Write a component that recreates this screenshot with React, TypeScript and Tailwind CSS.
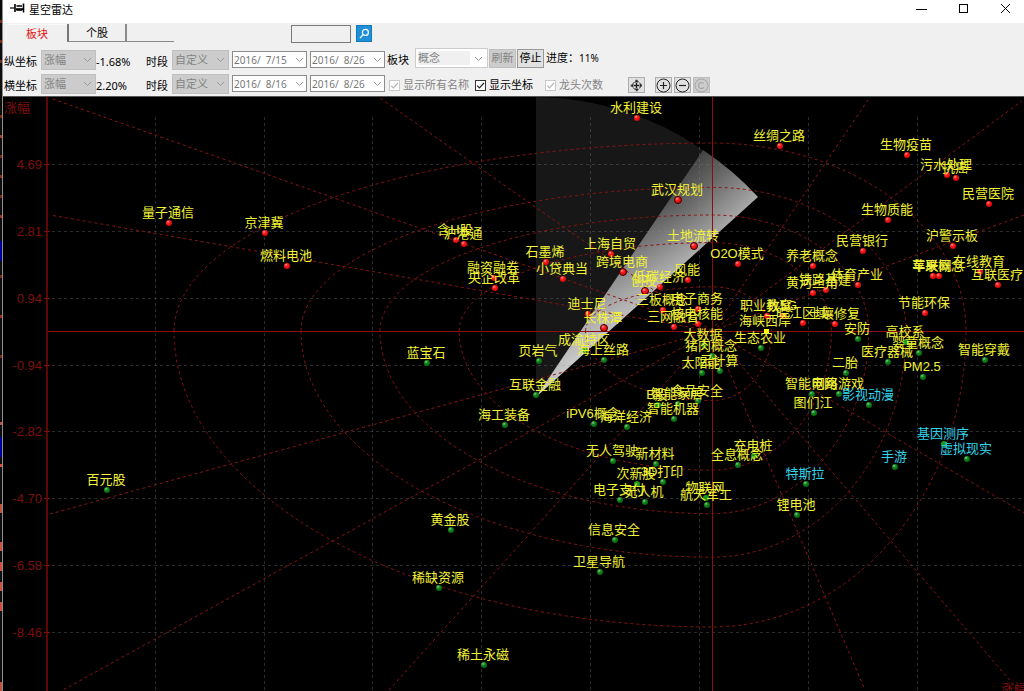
import React, { useState } from "react";

type Tone = "up" | "down" | "flat";
type Node = { name: string; x: number; y: number; tone: Tone; hot?: boolean; lit?: boolean };

const up = (name: string, x: number, y: number, hot = false): Node => ({ name, x, y, tone: "up", hot });
const down = (name: string, x: number, y: number, lit = false): Node => ({ name, x, y, tone: "down", lit });

const NODES: Node[] = [
  up("水利建设", 637, 118),
  up("丝绸之路", 780, 146),
  up("生物疫苗", 907, 155),
  up("污水处理", 947, 175),
  up("抗癌", 956, 178),
  up("民营医院", 989, 204),
  up("武汉规划", 678, 200, true),
  up("生物质能", 888, 220),
  up("量子通信", 169, 223),
  up("京津冀", 265, 233),
  up("含H股", 456, 240),
  up("沪港通", 464, 244),
  up("土地流转", 694, 246, true),
  up("沪警示板", 953, 246),
  up("民营银行", 863, 251),
  up("上海自贸", 611, 254),
  up("石墨烯", 546, 262),
  up("O2O模式", 738, 264),
  up("养老概念", 813, 266),
  up("燃料电池", 287, 266),
  up("跨境电商", 623, 272, true),
  up("在线教育", 980, 272),
  up("车联网", 933, 276),
  up("苹果概念", 939, 276),
  up("融资融券", 494, 278),
  up("小贷典当", 563, 279),
  up("风能", 688, 280),
  up("体育产业", 858, 285),
  up("互联医疗", 998, 285),
  up("低碳经济", 660, 287),
  up("央企改革", 495, 288),
  up("铁路基建", 826, 290),
  up("创投", 645, 291, true),
  up("黄河三角", 813, 293),
  up("三板概念", 663, 310),
  up("电子商务", 698, 309),
  up("节能环保", 925, 313),
  up("迪士尼", 588, 314),
  up("职业教育", 767, 316),
  up("数5G", 783, 316),
  up("皖江区域", 803, 323),
  up("核电核能", 698, 324),
  up("土壤修复", 835, 324),
  up("三网融合", 674, 327),
  up("长株潭", 604, 328, true),
  { name: "海峡西岸", x: 766, y: 331, tone: "flat" },
  down("安防", 858, 339),
  down("高校系", 906, 342, true),
  down("大数据", 704, 345),
  down("生态农业", 761, 348),
  down("成渝特区", 585, 350, true),
  down("婴童概念", 919, 353),
  down("猪肉概念", 712, 356),
  down("海上丝路", 604, 360),
  down("智能穿戴", 985, 360),
  down("页岩气", 539, 361),
  down("医疗器械", 888, 362),
  down("蓝宝石", 427, 363),
  down("云计算", 720, 371),
  down("太阳能", 702, 373),
  down("二胎", 846, 373),
  down("PM2.5", 923, 377),
  down("智能电网", 812, 394),
  down("网络游戏", 839, 394),
  down("互联金融", 536, 395),
  down("食品安全", 698, 401),
  down("智能家居", 678, 404),
  down("B股", 658, 405, true),
  down("影视动漫", 869, 405),
  down("图们江", 814, 413),
  down("智能机器", 674, 419),
  down("iPV6概念", 594, 424),
  down("海工装备", 505, 425),
  down("海洋经济", 627, 427),
  down("基因测序", 944, 444, true),
  down("充电桩", 754, 456, true),
  down("虚拟现实", 967, 459),
  down("无人驾驶", 613, 461),
  down("新材料", 656, 464),
  down("全息概念", 738, 465),
  down("手游", 895, 467),
  down("3D打印", 663, 482),
  down("特斯拉", 806, 484),
  down("次新股", 637, 484, true),
  down("百元股", 107, 490),
  down("物联网", 706, 498, true),
  down("电子支付", 620, 500),
  down("无人机", 645, 502),
  down("航天军工", 707, 505),
  down("锂电池", 797, 515),
  down("黄金股", 451, 530),
  down("信息安全", 615, 540),
  down("卫星导航", 600, 572),
  down("稀缺资源", 439, 588),
  down("稀土永磁", 484, 665),
];

const WATCHED = ["影视动漫", "基因测序", "虚拟现实", "手游", "特斯拉"];

const TICKS = [
  { y: 164, label: "4.69" },
  { y: 231, label: "2.81" },
  { y: 298, label: "0.94" },
  { y: 365, label: "-0.94" },
  { y: 431, label: "-2.82" },
  { y: 498, label: "-4.70" },
  { y: 565, label: "-6.58" },
  { y: 632, label: "-8.46" },
];
const COLUMNS = [155, 264, 372, 481, 590, 699, 808, 917];

const CX = 712;
const CY = 331;
const REACH = { left: 538, right: 254, top: 188, bottom: 296 };
const RINGS = [1, 0.764, 0.617, 0.47, 0.235];

const ring = (k: number) => {
  const { left, right, top, bottom } = REACH;
  return (
    `M${CX - left * k} ${CY}` +
    `A${left * k} ${top * k} 0 0 1 ${CX} ${CY - top * k}` +
    `A${right * k} ${top * k} 0 0 1 ${CX + right * k} ${CY}` +
    `A${right * k} ${bottom * k} 0 0 1 ${CX} ${CY + bottom * k}` +
    `A${left * k} ${bottom * k} 0 0 1 ${CX - left * k} ${CY}`
  );
};

const RAYS = [
  [50, 98], [50, 215], [380, 98],
  [868, 100], [1022, 101], [1024, 215],
  [50, 514], [63, 690], [389, 690],
  [1024, 513], [1018, 690], [865, 690],
];

function RadarChart() {
  return (
    <svg
      viewBox="3 97 1021 594"
      className="block h-auto w-full bg-black"
      role="img"
      aria-label="星空雷达"
    >
      <defs>
        <linearGradient id="beam" gradientUnits="userSpaceOnUse" x1="390" y1="429" x2="442" y2="486">
          <stop offset="0" stopColor="#3c3c3c" />
          <stop offset="0.45" stopColor="#686868" />
          <stop offset="1" stopColor="#a8a8a8" />
        </linearGradient>
        <radialGradient id="core" gradientUnits="userSpaceOnUse" cx="575" cy="365" r="190">
          <stop offset="0" stopColor="#ffffff" stopOpacity="0.42" />
          <stop offset="1" stopColor="#ffffff" stopOpacity="0" />
        </radialGradient>
        <radialGradient id="red" cx="0.35" cy="0.3" r="0.8">
          <stop offset="0" stopColor="#ff9c9c" />
          <stop offset="0.35" stopColor="#ff1c1c" />
          <stop offset="1" stopColor="#c80000" />
        </radialGradient>
        <radialGradient id="green" cx="0.35" cy="0.3" r="0.8">
          <stop offset="0" stopColor="#8fd08f" />
          <stop offset="0.35" stopColor="#158a20" />
          <stop offset="1" stopColor="#005c08" />
        </radialGradient>
        <clipPath id="plot">
          <rect x="50" y="97" width="974" height="594" />
        </clipPath>
      </defs>

      <path d="M536 397V97A300 300 0 0 1 703 150Z" fill="#171717" />
      <path d="M536 397L703 150A299 299 0 0 1 758 197Z" fill="url(#beam)" />
      <path d="M536 397L703 150A299 299 0 0 1 758 197Z" fill="url(#core)" />

      <g stroke="#8c8c8c" strokeOpacity="0.3" strokeDasharray="3 3" shapeRendering="crispEdges">
        {COLUMNS.map((x) => (
          <line key={x} x1={x + 0.5} x2={x + 0.5} y1="117" y2="691" />
        ))}
        {TICKS.map((t) => (
          <line key={t.y} x1="52" x2="1024" y1={t.y + 0.5} y2={t.y + 0.5} />
        ))}
      </g>

      <g clipPath="url(#plot)" fill="none" stroke="#8a1414" strokeDasharray="3 3">
        {RINGS.map((k) => (
          <path key={k} d={ring(k)} />
        ))}
        {RAYS.map(([x, y]) => (
          <line key={`${x}-${y}`} x1={CX} y1={CY} x2={x} y2={y} />
        ))}
      </g>

      <g shapeRendering="crispEdges">
        <rect x="47" y="331" width="977" height="1" fill="#8c1010" />
        <rect x="712" y="97" width="1" height="594" fill="#8c1010" />
        <rect x="46" y="97" width="2" height="594" fill="#5e0505" />
        {TICKS.map((t) => (
          <rect key={t.y} x="44" y={t.y} width="6" height="1" fill="#7d0f0f" />
        ))}
      </g>

      <g className="font-['Liberation_Sans','Noto_Sans_CJK_SC',sans-serif] text-[13px]" fill="#7d0f0f">
        <text x="4" y="112">涨幅</text>
        <text x="1001" y="693">涨幅</text>
        {TICKS.map((t) => (
          <text key={t.y} x="42" y={t.y + 5} textAnchor="end">
            {t.label}
          </text>
        ))}
      </g>

      {NODES.map((n) =>
        n.tone === "flat" ? (
          <rect key={n.name} x={n.x - 2} y={n.y - 2} width="5" height="5" fill="#ffff00" />
        ) : (
          <circle
            key={n.name}
            cx={n.x}
            cy={n.y}
            r={n.hot ? 3.5 : 3}
            fill={n.lit ? "#1c9a1c" : n.tone === "up" ? "url(#red)" : "url(#green)"}
            stroke={n.hot ? "#3a0000" : "none"}
          />
        )
      )}
      <g
        className="font-['Liberation_Sans','Noto_Sans_CJK_SC',sans-serif] text-[13px]"
        textAnchor="middle"
      >
        {NODES.map((n) => (
          <text key={n.name} x={n.x - 1} y={n.y - 6} fill={WATCHED.includes(n.name) ? "#30d4ea" : "#f2f236"}>
            {n.name}
          </text>
        ))}
      </g>
    </svg>
  );
}

function Chevron({ className = "" }: { className?: string }) {
  return (
    <svg viewBox="0 0 9 6" className={`h-[6px] w-[9px] fill-none stroke-[#9a9a9a] ${className}`} aria-hidden="true">
      <path d="M1 1L4.5 4.5L8 1" />
    </svg>
  );
}

function GreySelect({ label, value }: { label: string; value: string }) {
  return (
    <div className="relative h-5">
      <select
        aria-label={label}
        disabled
        className="block h-full w-full appearance-none border border-[#c0c0c0] bg-[#cccccc] pt-px pl-[2px] text-[11px] leading-4 text-[#838383] opacity-100"
      >
        <option>{value}</option>
      </select>
      <Chevron className="pointer-events-none absolute top-[7px] right-1" />
    </div>
  );
}

function DateBox({ label, value }: { label: string; value: string }) {
  return (
    <div className="ml-[3px] flex h-[17px] items-center border border-[#8c8c8c] bg-white pr-[2px]">
      <input
        aria-label={label}
        defaultValue={value}
        className="w-0 min-w-0 flex-1 bg-transparent pl-px font-['Noto_Sans',sans-serif] text-[10px] leading-[14px] whitespace-pre text-[#777777] outline-none"
      />
      <button aria-label="选择日期">
        <Chevron className="block" />
      </button>
    </div>
  );
}

function AxisControls(props: { axis: string; change: string; from: string; to: string }) {
  const { axis, change, from, to } = props;
  return (
    <div className="grid h-[25px] shrink-0 grid-cols-[37px_55px_50px_26px_57px_78px_78px] items-center pl-px">
      <span className="pt-[5px]">{axis}</span>
      <GreySelect label={axis} value="涨幅" />
      <span className="pt-[5px] font-['Noto_Sans',sans-serif]">{change}</span>
      <span className="pt-[5px]">时段</span>
      <GreySelect label={`${axis}时段`} value="自定义" />
      <DateBox label={`${axis}开始`} value={from} />
      <DateBox label={`${axis}结束`} value={to} />
    </div>
  );
}

function Tick({ text, disabled = false, className }: { text: string; disabled?: boolean; className: string }) {
  const [on, setOn] = useState(true);
  const tone = disabled ? "border-[#c8c8c8]" : "border-[#333333]";
  return (
    <label className={`flex items-center gap-[3px] whitespace-nowrap ${disabled ? "text-[#838383]" : "text-black"} ${className}`}>
      <span className="relative block h-[11px] w-[11px]">
        <input
          type="checkbox"
          checked={on}
          disabled={disabled}
          onChange={(e) => setOn(e.target.checked)}
          className={`block h-[11px] w-[11px] appearance-none border bg-white ${tone}`}
        />
        {on && (
          <svg
            viewBox="0 0 11 11"
            aria-hidden="true"
            className={`pointer-events-none absolute inset-0 h-full w-full fill-none ${disabled ? "stroke-[#b5b5b5]" : "stroke-[#222222]"}`}
          >
            <path d="M2.2 5.6L4.4 7.9L9 3" strokeWidth="1.2" />
          </svg>
        )}
      </span>
      {text}
    </label>
  );
}

const iconButton = "flex h-4 w-[17px] items-center justify-center border";

function ZoomButton({ label, d, disabled = false }: { label: string; d: string; disabled?: boolean }) {
  return (
    <button
      aria-label={label}
      disabled={disabled}
      className={`${iconButton} ${disabled ? "border-[#bdbdbd] bg-[#cccccc]" : "border-[#adadad] bg-[#e1e1e1]"}`}
    >
      <svg viewBox="0 0 15 15" className={`h-[15px] w-[15px] shrink-0 fill-none ${disabled ? "stroke-[#a5a5a5]" : "stroke-[#222222]"}`}>
        <circle cx="7.5" cy="7.5" r="6.5" />
        <path d={d} strokeWidth="1.2" />
      </svg>
    </button>
  );
}

const SPECKS = [
  [20, "#7a2a10"], [40, "#7a2a10"], [60, "#6a3020"], [115, "#7a2a10"], [135, "#a04020"], [155, "#7a2a10"],
  [175, "#903018"], [195, "#7a2a10"], [215, "#a03020"], [275, "#7a2a10"], [315, "#a03020"], [355, "#7a2a10"],
  [422, "#c05040"], [464, "#d05040"], [504, "#c05040"], [542, "#d05040"], [562, "#d05040"], [582, "#d05040"],
  [602, "#d05040"], [682, "#c05040"],
] as const;

export default function App() {
  return (
    <div className="flex min-h-screen bg-black font-['Liberation_Sans','Noto_Sans_CJK_SC',sans-serif] text-[11px] leading-4 text-black">
      <div className="w-[3px] shrink-0 overflow-hidden border-r border-[#8f8f8f] bg-[#0c0c0c]" aria-hidden="true">
        <svg viewBox="0 0 2 691" className="block w-[2px]">
          {SPECKS.map(([y, c]) => (
            <rect key={y} x="0" y={y} width="2" height={y > 500 ? 9 : 3} fill={c} />
          ))}
          <rect x="0" y="241" width="2" height="20" fill="#00009a" />
          <rect x="0" y="437" width="2" height="20" fill="#00009a" />
        </svg>
      </div>

      <div className="flex min-w-0 flex-1 flex-col">
        <header className="border-b border-[#555555] bg-[#f0f0f0]">
          <div className="flex h-[23px] items-center bg-white pl-[7px]">
            <svg viewBox="0 0 15 10" className="mb-[7px] h-[10px] w-[15px] fill-none stroke-black" aria-hidden="true">
              <path d="M0 5H5" strokeWidth="1.2" />
              <path d="M5 1V9M6.5 3H12M6.5 7H12M13.5 0.5V9.5" strokeWidth="1.6" />
              <path d="M6 6.2H13" strokeWidth="2" />
            </svg>
            <h1 className="ml-1 pb-[3px]">星空雷达</h1>
            <div className="ml-auto flex h-[17px] gap-1 self-start">
              <button aria-label="最小化" className="flex w-[38px] items-center justify-center">
                <svg viewBox="0 0 11 11" className="h-[11px] w-[11px] stroke-black"><path d="M0 6.5H11" /></svg>
              </button>
              <button aria-label="最大化" className="flex w-[38px] items-center justify-center">
                <svg viewBox="0 0 11 11" className="h-[11px] w-[11px] fill-none stroke-black"><rect x="1.5" y="1.5" width="8" height="8" /></svg>
              </button>
              <button aria-label="关闭" className="flex w-[38px] items-center justify-center">
                <svg viewBox="0 0 11 11" className="h-[11px] w-[11px] fill-none stroke-black"><path d="M1 1L10 10M10 1L1 10" /></svg>
              </button>
            </div>
          </div>

          <div className="flex h-[23px] items-start pt-px pl-[3px]">
            <div role="tablist" className="flex h-[18px]">
              <button role="tab" aria-selected="true" className="w-[61px] border-t border-l border-[#f8f8f8] text-[#e81010]">
                板块
              </button>
              <button role="tab" aria-selected="false" className="w-[60px] border-r-2 border-b border-l-2 border-[#8a8a8a] border-l-[#777777]">
                个股
              </button>
              <span className="w-[47px] border-b border-[#8a8a8a]" />
            </div>
            <div className="ml-[117px] flex gap-[5px] pt-px">
              <input aria-label="搜索" className="h-[18px] w-[60px] border border-[#7a7a7a] bg-[#f0f0f0] px-1 outline-none" />
              <button aria-label="查找" className="flex h-[17px] w-4 items-center justify-center border border-[#1478b8] bg-[#1e90d8]">
                <svg viewBox="0 0 11 11" className="h-[11px] w-[11px] fill-none stroke-white" aria-hidden="true">
                  <circle cx="6.4" cy="4.4" r="3" strokeWidth="1.2" />
                  <path d="M4.2 6.6L1 10" strokeWidth="1.3" />
                </svg>
              </button>
            </div>
          </div>

          <div className="flex h-[25px] items-start pt-px">
            <AxisControls axis="纵坐标" change="-1.68%" from="2016/  7/15" to="2016/  8/26" />
            <div className="flex h-[22px] items-center whitespace-nowrap">
              <label htmlFor="board" className="w-[30px] pt-1 pl-[2px]">板块</label>
              <div className="relative h-5 w-[73px] border border-[#cccccc] bg-white p-[2px]">
                <select
                  id="board"
                  disabled
                  className="block h-[14px] w-[52px] appearance-none bg-[#f0f0f0] text-[11px] leading-[14px] text-[#838383] opacity-100"
                >
                  <option>概念</option>
                </select>
                <Chevron className="pointer-events-none absolute top-[7px] right-1" />
              </div>
              <button disabled className="ml-px h-[19px] w-[27px] border border-[#bfbfbf] bg-[#cccccc] leading-[17px] text-[#838383]">刷新</button>
              <button className="ml-px h-[19px] w-[27px] border border-[#999999] bg-[#e1e1e1] leading-[17px]">停止</button>
              <span className="ml-[2px]">进度：</span>
              <span className="font-['Noto_Sans',sans-serif] text-[10px]">11%</span>
            </div>
          </div>

          <div className="flex h-[25px]">
            <AxisControls axis="横坐标" change="2.20%" from="2016/  8/16" to="2016/  8/26" />
            <div className="flex h-7 items-center pl-1">
              <Tick text="显示所有名称" disabled className="w-[86px]" />
              <Tick text="显示坐标" className="w-[70px]" />
              <Tick text="龙头次数" disabled className="w-[83px]" />
              <button aria-label="居中" className={`${iconButton} border-[#adadad] bg-[#e1e1e1]`}>
                <svg viewBox="0 0 13 13" className="h-[13px] w-[13px] shrink-0 fill-none stroke-[#222222]">
                  <path d="M6.5 0.8L9.2 3.8L12.2 6.5L9.2 9.2L6.5 12.2L3.8 9.2L0.8 6.5L3.8 3.8Z" strokeDasharray="3.2 1.2" />
                  <path d="M6.5 1L8.4 3.4H4.6zM6.5 12L8.4 9.6H4.6zM1 6.5L3.4 4.6V8.4zM12 6.5L9.6 4.6V8.4z" fill="#222222" stroke="none" />
                  <path d="M6.5 4V9M4 6.5H9" strokeWidth="1.4" />
                </svg>
              </button>
              <div className="ml-[10px] flex gap-[2px]">
                <ZoomButton label="放大" d="M7.5 4V11M4 7.5H11" />
                <ZoomButton label="缩小" d="M4 7.5H11" />
                <ZoomButton label="还原" d="M9.8 5.6A3 3 0 1 0 9.8 9.4" disabled />
              </div>
            </div>
          </div>
        </header>

        <main className="min-w-0">
          <RadarChart />
        </main>
      </div>
    </div>
  );
}
